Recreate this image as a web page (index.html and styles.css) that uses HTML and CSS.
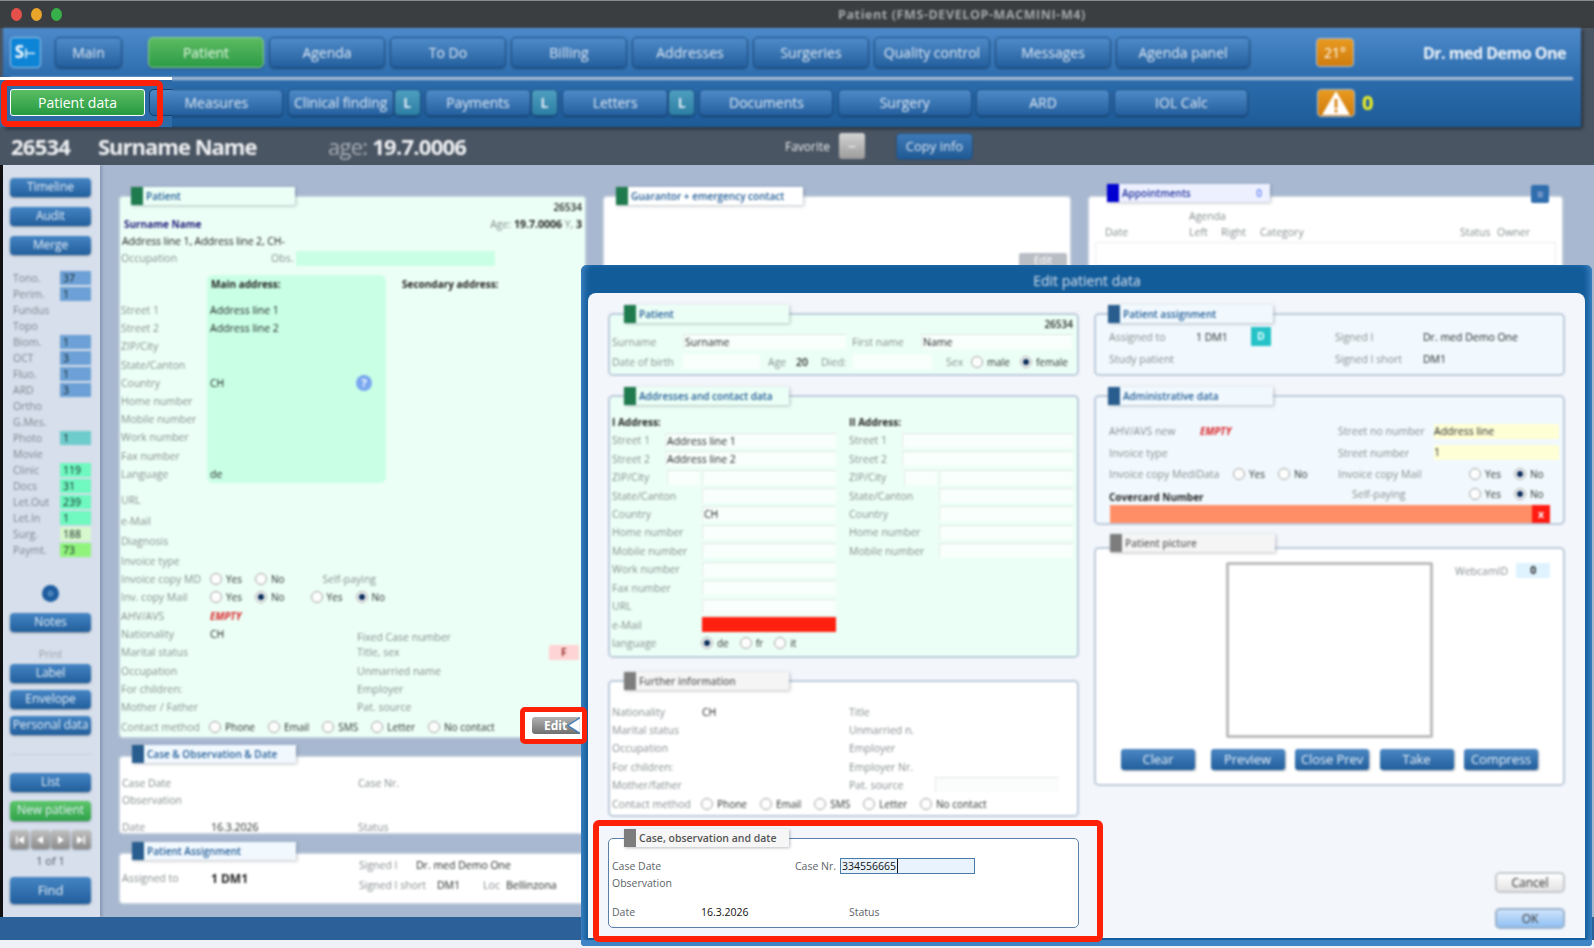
FILE: index.html
```html
<!DOCTYPE html>
<html lang="en">
<head>
<meta charset="utf-8">
<title>Patient</title>
<link rel="stylesheet" href="styles.css">
</head>
<body>
<div class="window">
  <header class="titlebar">
    <span class="light red"></span><span class="light amber"></span><span class="light green"></span>
    <span class="wintitle">Patient (FMS-DEVELOP-MACMINI-M4)</span>
  </header>

  <div class="chrome">
    <nav class="toolbar soft">
      <div class="tbrow tbrow1">
        <span class="logo">S<b>⊢</b></span>
        <a class="tb main-btn">Main</a>
        <a class="tb on">Patient</a>
        <a class="tb">Agenda</a>
        <a class="tb">To Do</a>
        <a class="tb">Billing</a>
        <a class="tb">Addresses</a>
        <a class="tb">Surgeries</a>
        <a class="tb">Quality control</a>
        <a class="tb">Messages</a>
        <a class="tb w134">Agenda panel</a>
        <span class="badge temp">21°</span>
        <span class="doctor">Dr. med Demo One</span>
      </div>
      <div class="tbsep"></div>
      <div class="tbrow tbrow2">
        <a class="tb w134">Patient data</a>
        <a class="tb w134">Measures</a>
        <a class="tb w106 join">Clinical finding</a><a class="tb l">L</a>
        <a class="tb w106 join">Payments</a><a class="tb l">L</a>
        <a class="tb w106 join">Letters</a><a class="tb l">L</a>
        <a class="tb w134">Documents</a>
        <a class="tb w134">Surgery</a>
        <a class="tb w134">ARD</a>
        <a class="tb w134">IOL Calc</a>
        <span class="badge warn"><svg viewBox="0 0 30 26" width="30" height="26"><path d="M15 1 L29 25 H1 Z" fill="#fff"/><rect x="13.6" y="9" width="2.8" height="9" fill="#d9861a"/><rect x="13.6" y="19.5" width="2.8" height="3" fill="#d9861a"/></svg></span>
        <span class="warncount">0</span>
      </div>
    </nav>
    <div class="patientbar soft">
      <span class="pid">26534</span>
      <span class="pname">Surname Name</span>
      <span class="page"><i>age:</i> 19.7.0006</span>
      <span class="fav">Favorite</span>
      <span class="favbtn">–</span>
      <a class="copyinfo">Copy info</a>
    </div>
  </div>

  <div class="body">
    <aside class="sidebar">
      <a class="sbtn">Timeline</a>
      <a class="sbtn">Audit</a>
      <a class="sbtn">Merge</a>
      <ul class="counts">
        <li><span>Tono.</span><b class="c-blue">37</b></li>
        <li><span>Perim.</span><b class="c-blue">1</b></li>
        <li><span>Fundus</span></li>
        <li><span>Topo</span></li>
        <li><span>Biom.</span><b class="c-blue">1</b></li>
        <li><span>OCT</span><b class="c-blue">3</b></li>
        <li><span>Fluo.</span><b class="c-blue">1</b></li>
        <li><span>ARD</span><b class="c-blue">3</b></li>
        <li><span>Ortho</span></li>
        <li><span>G.Mes.</span></li>
        <li><span>Photo</span><b class="c-teal">1</b></li>
        <li><span>Movie</span></li>
        <li><span>Clinic</span><b class="c-mint">119</b></li>
        <li><span>Docs</span><b class="c-mint">31</b></li>
        <li><span>Let.Out</span><b class="c-mint">239</b></li>
        <li><span>Let.In</span><b class="c-mint">1</b></li>
        <li><span>Surg.</span><b class="c-pale">188</b></li>
        <li><span>Paymt.</span><b class="c-lime">73</b></li>
      </ul>
      <span class="round"><i></i></span>
      <a class="sbtn notes">Notes</a>
      <span class="printlbl">Print</span>
      <a class="sbtn">Label</a>
      <a class="sbtn g6">Envelope</a>
      <a class="sbtn g6">Personal data</a>
      <hr class="sbsep">
      <a class="sbtn">List</a>
      <a class="sbtn newp">New patient</a>
      <div class="pager">
        <span><svg viewBox="0 0 10 10" width="10" height="10"><path d="M1 1h1.5v8H1zM9 1v8L3 5z" fill="#fff"/></svg></span>
        <span><svg viewBox="0 0 10 10" width="10" height="10"><path d="M8 1v8L2 5z" fill="#fff"/></svg></span>
        <span><svg viewBox="0 0 10 10" width="10" height="10"><path d="M2 1v8l6-4z" fill="#fff"/></svg></span>
        <span><svg viewBox="0 0 10 10" width="10" height="10"><path d="M1 1v8l6-4zM7.5 1H9v8H7.5z" fill="#fff"/></svg></span>
      </div>
      <span class="oneof">1 of 1</span>
      <a class="sbtn find">Find</a>
    </aside>

    <main class="desk soft">
      <div class="deskcol">
        <section class="panel mint p-patient">
          <div class="tab"><i class="sq sq-green"></i><span>Patient</span></div>
          <div class="p-id">26534</div>
          <div class="p-head"><b class="navy">Surname Name</b><span class="p-age"><span class="lb">Age:</span> <b>19.7.0006</b> <span class="lb">Y,</span> <b>3</b></span></div>
          <div class="p-addr">Address line 1, Address line 2, CH-</div>
          <div class="p-occ"><span class="lb">Occupation</span><span class="lb obs">Obs.</span><span class="obsbox"></span></div>
          <div class="addrgrid">
            <div class="addrcell"></div>
            <b class="h-main">Main address:</b><b class="h-sec">Secondary address:</b>
            <span class="lb r3">Street 1</span><span class="val r3">Address line 1</span>
            <span class="lb r4">Street 2</span><span class="val r4">Address line 2</span>
            <span class="lb r5">ZIP/City</span>
            <span class="lb r6">State/Canton</span>
            <span class="lb r7">Country</span><span class="val r7 withhelp">CH<i class="help">?</i></span>
            <span class="lb r8">Home number</span>
            <span class="lb r9">Mobile number</span>
            <span class="lb r10">Work number</span>
            <span class="lb r11">Fax number</span>
            <span class="lb r12">Language</span><span class="val r12">de</span>
          </div>
          <div class="plain"><span class="lb">URL</span></div>
          <div class="plain tall"><span class="lb">e-Mail</span></div>
          <div class="plain"><span class="lb">Diagnosis</span></div>
          <div class="plain"><span class="lb">Invoice type</span></div>
          <div class="crow"><span class="lb lc">Invoice copy MD</span><span class="radios"><label class="opt"><i class="rd"></i>Yes</label><label class="opt"><i class="rd"></i>No</label></span><span class="lb selfp">Self-paying</span></div>
          <div class="crow"><span class="lb lc">Inv. copy Mail</span><span class="radios"><label class="opt"><i class="rd"></i>Yes</label><label class="opt"><i class="rd on"></i>No</label></span><span class="radios second"><label class="opt"><i class="rd"></i>Yes</label><label class="opt"><i class="rd on"></i>No</label></span></div>
          <div class="crow"><span class="lb lc">AHV/AVS</span><em class="empty">EMPTY</em></div>
          <div class="twocol">
            <div class="crow"><span class="lb lc">Nationality</span><span class="val">CH</span></div><div class="crow low"><span class="lb">Fixed Case number</span></div>
            <div class="crow"><span class="lb lc">Marital status</span></div><div class="crow"><span class="lb">Title, sex</span><span class="sexbox">F</span></div>
            <div class="crow"><span class="lb lc">Occupation</span></div><div class="crow"><span class="lb">Unmarried name</span></div>
            <div class="crow"><span class="lb lc">For children:</span></div><div class="crow"><span class="lb">Employer</span></div>
            <div class="crow"><span class="lb lc">Mother / Father</span></div><div class="crow"><span class="lb">Pat. source</span></div>
          </div>
          <div class="crow contact"><span class="lb lc">Contact method</span><span class="radios wide"><label class="opt"><i class="rd"></i>Phone</label><label class="opt"><i class="rd"></i>Email</label><label class="opt"><i class="rd"></i>SMS</label><label class="opt"><i class="rd"></i>Letter</label><label class="opt"><i class="rd"></i>No contact</label></span></div>
        </section>

        <section class="panel white p-case">
          <div class="tab"><i class="sq sq-blue"></i><span>Case &amp; Observation &amp; Date</span></div>
          <div class="twocol mt8">
            <div class="crow"><span class="lb lc">Case Date</span></div><div class="crow"><span class="lb">Case Nr.</span></div>
            <div class="crow"><span class="lb lc">Observation</span></div><div class="crow"></div>
          </div>
          <div class="twocol mt10">
            <div class="crow"><span class="lb lc">Date</span><span class="val">16.3.2026</span></div><div class="crow"><span class="lb">Status</span></div>
          </div>
        </section>

        <section class="panel white p-assign">
          <div class="tab"><i class="sq sq-blue"></i><span>Patient Assignment</span></div>
          <div class="assignrow">
            <div class="as-left"><span class="lb lc">Assigned to</span><b class="big">1 DM1</b></div>
            <div class="as-right">
              <div class="crow"><span class="lb s-lb">Signed I</span><span class="val">Dr. med Demo One</span></div>
              <div class="crow"><span class="lb s-lb2">Signed I short</span><span class="val">DM1</span><span class="lb loc">Loc</span><span class="val">Bellinzona</span></div>
            </div>
          </div>
        </section>
      </div>

      <section class="panel white p-guar">
        <div class="tab"><i class="sq sq-green"></i><span>Guarantor + emergency contact</span></div>
        <span class="peek">Edit</span>
      </section>

      <section class="panel white p-appt">
        <div class="apptop">
          <div class="tab tab-appt"><i class="sq sq-navy"></i><span>Appointments</span><em>0</em></div>
          <span class="mini">≡</span>
        </div>
        <div class="appt-h1"><span class="lb">Agenda</span></div>
        <div class="appt-h2"><span class="lb">Date</span><span class="lb">Left</span><span class="lb">Right</span><span class="lb">Category</span><span class="lb">Status</span><span class="lb">Owner</span></div>
        <div class="appt-list"></div>
      </section>
    </main>
  </div>
  <footer class="footer"></footer>
  <div class="bottomline"></div>

  <!-- Edit dialog -->
  <div class="modal">
    <div class="modaltitle">Edit patient data</div>
    <div class="modalbody">
      <div class="mcol">
        <section class="panel mint fs f-pat soft">
          <div class="tab"><i class="sq sq-green"></i><span>Patient</span></div>
          <div class="f-id">26534</div>
          <div class="frow"><span class="lb w71">Surname</span><span class="inp w163">Surname</span><span class="lb fn">First name</span><span class="inp w151">Name</span></div>
          <div class="frow mt4"><span class="lb w71">Date of birth</span><span class="inp bare w77"></span><span class="lb ag">Age</span><b class="ag2">20</b><span class="lb died">Died:</span><span class="inp bare w79"></span><span class="lb sx">Sex</span><span class="radios sexes"><label class="opt"><i class="rd"></i>male</label><label class="opt"><i class="rd on"></i>female</label></span></div>
        </section>

        <section class="panel mint fs f-adr soft">
          <div class="tab"><i class="sq sq-green"></i><span>Addresses and contact data</span></div>
          <div class="adrcols">
            <div class="adrcol">
              <b class="adrh">I Address:</b>
              <div class="arow"><span class="lb w53">Street 1</span><span class="inp fx">Address line 1</span></div>
              <div class="arow"><span class="lb w53">Street 2</span><span class="inp fx">Address line 2</span></div>
              <div class="arow"><span class="lb w55">ZIP/City</span><span class="inp w33"></span><span class="inp fx"></span></div>
              <div class="arow"><span class="lb w90">State/Canton</span><span class="inp fx"></span></div>
              <div class="arow"><span class="lb w90">Country</span><span class="inp fx">CH</span></div>
              <div class="arow"><span class="lb w90">Home number</span><span class="inp fx"></span></div>
              <div class="arow"><span class="lb w90">Mobile number</span><span class="inp fx"></span></div>
              <div class="arow"><span class="lb w90">Work number</span><span class="inp fx"></span></div>
              <div class="arow"><span class="lb w90">Fax number</span><span class="inp fx"></span></div>
              <div class="arow"><span class="lb w90">URL</span><span class="inp fx"></span></div>
              <div class="arow"><span class="lb w90">e-Mail</span><span class="inp fx bad"></span></div>
              <div class="arow"><span class="lb w90">language</span><span class="radios langs"><label class="opt"><i class="rd on"></i>de</label><label class="opt"><i class="rd"></i>fr</label><label class="opt"><i class="rd"></i>it</label></span></div>
            </div>
            <div class="adrcol">
              <b class="adrh">II Address:</b>
              <div class="arow"><span class="lb w53">Street 1</span><span class="inp fx"></span></div>
              <div class="arow"><span class="lb w53">Street 2</span><span class="inp fx"></span></div>
              <div class="arow"><span class="lb w55">ZIP/City</span><span class="inp w33"></span><span class="inp fx"></span></div>
              <div class="arow"><span class="lb w90">State/Canton</span><span class="inp fx"></span></div>
              <div class="arow"><span class="lb w90">Country</span><span class="inp fx"></span></div>
              <div class="arow"><span class="lb w90">Home number</span><span class="inp fx"></span></div>
              <div class="arow"><span class="lb w90">Mobile number</span><span class="inp fx"></span></div>
            </div>
          </div>
        </section>

        <section class="panel white fs f-fur soft">
          <div class="tab tab-grey"><i class="sq sq-grey"></i><span>Further information</span></div>
          <div class="furgrid">
            <div class="arow"><span class="lb w90">Nationality</span><span class="val">CH</span></div><div class="arow"><span class="lb">Title</span></div>
            <div class="arow"><span class="lb w90">Marital status</span></div><div class="arow"><span class="lb">Unmarried n.</span></div>
            <div class="arow"><span class="lb w90">Occupation</span></div><div class="arow"><span class="lb">Employer</span></div>
            <div class="arow"><span class="lb w90">For children:</span></div><div class="arow"><span class="lb">Employer Nr.</span></div>
            <div class="arow"><span class="lb w90">Mother/father</span></div><div class="arow"><span class="lb w86">Pat. source</span><span class="inp w124"></span></div>
          </div>
          <div class="arow mt2"><span class="lb w90 cm">Contact method</span><span class="radios wide2"><label class="opt"><i class="rd"></i>Phone</label><label class="opt"><i class="rd"></i>Email</label><label class="opt"><i class="rd"></i>SMS</label><label class="opt"><i class="rd"></i>Letter</label><label class="opt"><i class="rd"></i>No contact</label></span></div>
        </section>

        <section class="panel fs f-case">
          <div class="tab tab-grey"><i class="sq sq-grey"></i><span>Case, observation and date</span></div>
          <div class="caserow r-first"><span class="cl cl183">Case Date</span><span class="cl">Case Nr.</span><span class="caseinp"><span class="caret">334556665</span></span></div>
          <div class="caserow"><span class="cl">Observation</span></div>
          <div class="caserow r-date"><span class="cl cl89">Date</span><span class="cv">16.3.2026</span><span class="cl">Status</span></div>
        </section>
      </div>

      <div class="mcol">
        <section class="panel bluish fs f-asg soft">
          <div class="tab tab-blue"><i class="sq sq-blue"></i><span>Patient assignment</span></div>
          <div class="asggrid">
            <span class="lb">Assigned to</span><span class="val asgv">1 DM1<i class="dbox">D</i></span><span class="lb">Signed I</span><span class="val">Dr. med Demo One</span>
            <span class="lb">Study patient</span><span></span><span class="lb">Signed I short</span><span class="val">DM1</span>
          </div>
        </section>

        <section class="panel bluish fs f-adm soft">
          <div class="tab tab-blue"><i class="sq sq-blue"></i><span>Administrative data</span></div>
          <div class="admgrid">
            <div class="admrow"><span class="lb w91">AHV/AVS new</span><em class="empty">EMPTY</em></div>
            <div class="admrow"><span class="lb w96">Street no number</span><span class="yel">Address line</span></div>
            <div class="admrow"><span class="lb">Invoice type</span></div>
            <div class="admrow"><span class="lb w96">Street number</span><span class="yel">1</span></div>
            <div class="admrow"><span class="lb w124">Invoice copy MediData</span><span class="radios"><label class="opt"><i class="rd"></i>Yes</label><label class="opt"><i class="rd"></i>No</label></span></div>
            <div class="admrow"><span class="lb w131">Invoice copy Mail</span><span class="radios"><label class="opt"><i class="rd"></i>Yes</label><label class="opt"><i class="rd on"></i>No</label></span></div>
            <div class="admrow"><b class="ccn">Covercard Number</b></div>
            <div class="admrow"><span class="lb w131 selfp2">Self-paying</span><span class="radios"><label class="opt"><i class="rd"></i>Yes</label><label class="opt"><i class="rd on"></i>No</label></span></div>
          </div>
          <div class="ccbar"><i>x</i></div>
        </section>

        <section class="panel white fs f-pic soft">
          <div class="tab tab-grey"><i class="sq sq-grey"></i><span>Patient picture</span></div>
          <div class="picrow">
            <div class="picbox"></div>
            <div class="webcam"><span class="lb">WebcamID</span><span class="camval">0</span></div>
          </div>
          <div class="picbtns">
            <a class="pbtn first">Clear</a><a class="pbtn">Preview</a><a class="pbtn">Close Prev</a><a class="pbtn">Take</a><a class="pbtn">Compress</a>
          </div>
        </section>

        <div class="dlgbtns soft">
          <a class="dbtn">Cancel</a>
          <a class="dbtn ok">OK</a>
        </div>
      </div>
    </div>
  </div>

  <!-- Red annotations, drawn over the screenshot -->
  <div class="note-tl">
    <div class="note-btn">Patient data</div>
    <div class="note-next"></div>
    <div class="note-box"></div>
  </div>
  <div class="note-edit"><span class="editpill">Edit<svg viewBox="0 0 14 17" width="14" height="17"><path d="M14 0 L1 8.5 L14 17" fill="#fff" stroke="#3f7fbe" stroke-width="1.5"/></svg></span></div>
  <div class="note-case"></div>
</div>
</body>
</html>
```

FILE: styles.css
```css
* { box-sizing: border-box; }
html, body { margin: 0; padding: 0; background: #fff; }
body { font-family: "Open Sans", "Liberation Sans", sans-serif; font-size: 10.5px; color: #222; overflow: hidden; }
a { display: block; text-decoration: none; }
i, em { font-style: normal; }
.soft { filter: blur(.95px); }

.window { position: relative; width: 1594px; height: 948px; overflow: hidden; background: #f4f6f8; display: flex; flex-direction: column; }

/* title bar */
.titlebar { height: 28px; flex: none; background: #3b3e41; border-top: 1px solid #8a8a8a; display: flex; align-items: center; padding-left: 11px; gap: 9px; }
.light { width: 11px; height: 13px; border-radius: 50%; filter: blur(.7px); }
.light.red { background: #e6504a; }
.light.amber { background: #e9a52a; }
.light.green { background: #37b04a; }
.wintitle { margin-left: 767px; color: #a6a9ab; font-weight: 700; font-size: 12.5px; letter-spacing: .6px; filter: blur(.95px); white-space: nowrap; }

/* toolbar */
.chrome { flex: none; background: #4a5563; }
.toolbar { width: 1578px; height: 99px; margin-left: 3px; padding-top: 9px; background: linear-gradient(#4d8acb, #2f6fb0 45%, #1d5b98); box-shadow: 2px 2px 3px rgba(0,0,0,.45); }
.tbrow { display: flex; align-items: center; }
.tbrow1 { height: 31px; padding-left: 7px; gap: 5px; }
.tbrow2 { height: 27px; margin-top: 9px; padding-left: 8px; gap: 4.3px; }
.tbsep { height: 3px; margin: 9px 8px 0 7px; background: #a9bfd6; }
.logo { width: 31px; height: 31px; flex: none; margin-right: 9px; background: #0d84d6; border: 1px solid #9cc4e6; border-radius: 4px; color: #fff; font-weight: 700; font-size: 17px; text-align: center; line-height: 28px; }
.logo b { font-weight: 700; font-size: 13px; font-family: "DejaVu Sans", sans-serif; }
.tb { flex: none; width: 116px; height: 100%; border: 1px solid #1c4f84; border-radius: 5px; background: linear-gradient(#4f8bc9, #245f9e); color: #dfeaf5; font-size: 14px; line-height: 29px; text-align: center; white-space: nowrap; box-shadow: 0 1px 2px rgba(0,0,0,.35); }
.tbrow2 .tb { line-height: 25px; }
.tb.main-btn { width: 67px; margin-right: 21px; }
.tb.on { background: linear-gradient(#5cbb62, #2c9b46); border-color: #8fd09a; color: #eaf9ea; }
.tb.w134 { width: 134px; }
.tb.w106 { width: 106px; }
.tb.join { margin-right: -4.3px; letter-spacing: -.1px; }
.tb.l { width: 27px; background: linear-gradient(#4f9fc0, #2c7ea3); font-weight: 700; }
.badge { flex: none; width: 38px; border: 1px solid #a9bfd6; border-radius: 4px; background: linear-gradient(#e89a20, #cf7c0d); color: #fff; text-align: center; display: flex; align-items: center; justify-content: center; }
.badge.temp { height: 29px; margin-left: 61px; font-size: 14px; }
.badge.warn { height: 28px; margin-left: 64px; }
.warncount { color: #f4f41c; font-size: 20px; font-weight: 700; margin-left: 3px; line-height: 1; }
.doctor { margin-left: auto; padding-right: 15px; color: #eef4fa; font-weight: 700; font-size: 16px; white-space: nowrap; letter-spacing: -.5px; }

/* patient bar */
.patientbar { height: 38px; display: flex; align-items: center; padding-left: 11px; color: #eef0f2; white-space: nowrap; }
.pid, .pname, .page { font-size: 22px; font-weight: 700; letter-spacing: -.75px; }
.pid { width: 87px; }
.pname { width: 230px; letter-spacing: -1px; }
.page { width: 457px; }
.page i { color: #a6adb5; font-weight: 500; }
.fav { font-size: 12px; width: 54px; color: #eceff2; }
.favbtn { width: 26px; height: 26px; background: linear-gradient(#d4d4d4, #9b9b9b); border-radius: 3px; text-align: center; color: #eee; font-size: 16px; line-height: 24px; margin-right: 31px; }
.copyinfo { width: 77px; height: 27px; border-radius: 4px; background: linear-gradient(#3f7ab8, #1f5a96); border: 1px solid #274f78; color: #dce8f4; text-align: center; font-size: 13px; line-height: 24px; }

/* body */
.body { flex: 1; min-height: 0; display: flex; background: #a8b8d0; }
.footer { flex: none; height: 23px; background: #2c6098; }
.bottomline { flex: none; height: 8px; background: #eef1f5; }

/* sidebar */
.sidebar { width: 100px; flex: none; border-left: 3px solid #111; background: #d6dfeb; padding: 13px 9px 0 7px; display: flex; flex-direction: column; box-shadow: 2px 0 3px rgba(70,90,130,.35); }
.sidebar > * { filter: blur(.95px); }
.sbtn { height: 19px; flex: none; margin-bottom: 10px; border-radius: 4px; background: linear-gradient(#4585c4, #215e9c); color: #e6eff8; text-align: center; font-size: 12px; line-height: 17px; box-shadow: 0 1px 2px rgba(40,50,70,.45); white-space: nowrap; letter-spacing: -.1px; }
.sbtn.g6 { margin-top: -3px; }
.counts { list-style: none; margin: 5px 0 0; padding: 0; height: 288px; }
.counts li { height: 16px; display: flex; align-items: center; }
.counts span { width: 50px; padding-left: 3px; color: #7d8690; font-size: 10.5px; }
.counts b { width: 31px; height: 14px; padding-left: 3px; font-weight: 500; font-size: 10.5px; line-height: 14px; color: #122; }
.c-blue { background: #6ca0d6; }
.c-teal { background: #6fcccc; }
.c-mint { background: #6ff8c0; }
.c-pale { background: #d6f8cc; }
.c-lime { background: #90f47c; }
.round { width: 17px; height: 17px; flex: none; margin: 27px 0 11px 32px; border-radius: 50%; background: #1e5da0; display: flex; align-items: center; justify-content: center; }
.round i { width: 5px; height: 5px; border: 1px solid #9cc4e6; border-radius: 50%; }
.notes { margin-bottom: 12px; }
.printlbl { height: 20px; text-align: center; color: #98a1ab; line-height: 20px; }
.sbsep { margin: 9px 0 18px; width: 81px; border: 0; border-top: 1px solid #c6cfdb; }
.newp { height: 20px; margin-top: -1px; margin-bottom: 9px; background: linear-gradient(#5cc56a, #2fa24a); }
.pager { display: flex; justify-content: space-between; width: 81px; }
.pager span { width: 19px; height: 19px; background: linear-gradient(#c0c0c0, #8c8c8c); border-radius: 3px; display: flex; align-items: center; justify-content: center; box-shadow: 0 1px 2px rgba(40,50,70,.4); }
.oneof { height: 24px; line-height: 24px; text-align: center; color: #556; font-size: 11px; }
.find { height: 27px; line-height: 26px; font-size: 13px; margin-top: 4px; }

/* desk */
.desk { flex: 1; min-width: 0; display: grid; grid-template-columns: 469px 470px 477px; column-gap: 15px; padding: 30px 0 0 18px; align-items: start; }
.deskcol { display: flex; flex-direction: column; }
.panel { border: 2px solid #bccada; border-radius: 5px; }
.mint { background: #ecfff6; }
.white { background: #fff; }
.bluish { background: #f1f9fe; }
.tab { width: 164px; height: 18px; margin: -10px 0 0 10px; background: inherit; display: flex; align-items: center; box-shadow: 1px 1px 3px rgba(60,70,90,.35); font-size: 10px; font-weight: 600; color: #1f5a94; white-space: nowrap; }
.p-case .tab, .p-assign .tab { background: #f1f8fe; margin-top: -12px; }
.sq { width: 12px; height: 100%; flex: none; margin-right: 3px; }
.sq-green { background: #1f7a4d; }
.sq-blue { background: #285d8e; }
.sq-navy { background: #0000d0; }
.sq-grey { background: #7d7d7d; }
.tab-grey { background: #f5f5f5; color: #666; }
.tab-blue { background: #f1f9fe; }
.lb { color: #858d8f; white-space: nowrap; }
.val { color: #1c2021; white-space: nowrap; font-weight: 500; }
.navy { color: #201a78; }

/* patient panel */
.p-patient { height: 544px; padding: 0 1px; }
.p-id { height: 15px; margin-top: -5px; text-align: right; font-weight: 600; font-size: 10px; line-height: 14px; padding-right: 2px; }
.p-head { display: flex; justify-content: space-between; padding: 0 2px 0 3px; margin-top: 1px; height: 17px; line-height: 17px; font-size: 10px; }
.p-age { font-size: 10.5px; }
.p-addr { height: 17px; padding-left: 1px; line-height: 17px; font-size: 10.5px; letter-spacing: -.1px; }
.p-occ { height: 16px; display: flex; align-items: center; }
.obs { margin-left: 94px; width: 25px; }
.obsbox { width: 199px; height: 15px; background: #c9ffe5; }
.addrgrid { margin-top: 9px; display: grid; grid-template-columns: 86px 179px 1fr; grid-template-rows: 18px 8px repeat(10, 18.2px); align-items: center; }
.addrcell { grid-column: 2; grid-row: 1 / -1; align-self: stretch; background: #c9ffe5; border-radius: 6px; }
.h-main, .h-sec { grid-row: 1; font-size: 10px; font-weight: 700; }
.h-main { grid-column: 2; padding-left: 4px; }
.h-sec { grid-column: 3; padding-left: 16px; }
.addrgrid .lb { grid-column: 1; }
.addrgrid .val { grid-column: 2; padding-left: 3px; }
.r3 { grid-row: 3; } .r4 { grid-row: 4; } .r5 { grid-row: 5; } .r6 { grid-row: 6; } .r7 { grid-row: 7; } .r8 { grid-row: 8; } .r9 { grid-row: 9; } .r10 { grid-row: 10; } .r11 { grid-row: 11; } .r12 { grid-row: 12; }
.withhelp { display: flex; justify-content: space-between; align-items: center; padding-right: 14px; }
.help { width: 16px; height: 16px; border-radius: 50%; background: #7aa8f0; color: #fff; text-align: center; line-height: 16px; font-size: 11px; font-weight: 700; }
.plain { height: 18px; line-height: 18px; margin-top: 2px; }
.addrgrid + .plain { margin-top: 8px; }
.plain.tall { margin-top: 3px; }
.crow { height: 18.3px; display: flex; align-items: center; white-space: nowrap; }
.lc { width: 89px; flex: none; }
.radios { display: flex; gap: 13px; font-size: 10px; color: #2a2f30; font-weight: 500; }
.opt { display: flex; align-items: center; gap: 4px; }
.rd { width: 12px; height: 12px; border: 1px solid #a5a5a5; border-radius: 50%; background: #fdfdfd; flex: none; display: block; }
.rd.on { background: radial-gradient(circle, #10325e 0 2.8px, #fff 3.6px); }
.selfp { margin-left: 38px; }
.second { margin-left: 26px; }
.empty { color: #d9262a; font-weight: 700; font-style: italic; font-size: 10px; }
.twocol { display: grid; grid-template-columns: 236px 1fr; }
.twocol .low { padding-top: 6px; }
.sexbox { margin-left: auto; margin-right: 5px; width: 30px; height: 15px; background: #ffd4d4; text-align: center; line-height: 15px; font-weight: 700; color: #933; }
.contact { height: 22px; margin-top: 0; }
.wide { margin-left: -1px; }
.p-case { height: 80px; margin-top: 16px; padding: 0 2px; }
.p-case .crow { height: 17px; }
.mt8 { margin-top: 11px; }
.mt10 { margin-top: 10px; }
.p-assign { height: 53px; margin-top: 17px; padding: 0 2px; }
.assignrow { display: flex; }
.as-left { width: 237px; display: flex; align-items: center; height: 30px; margin-top: 3px; }
.as-right { margin-top: -5px; }
.as-right .crow { height: 20.3px; }
.big { font-size: 12px; font-weight: 700; }
.s-lb { width: 57px; }
.s-lb2 { width: 78px; }
.loc { margin-left: 23px; width: 23px; }

.p-guar { height: 100px; }
.p-guar .tab { width: 187px; margin-left: 12px; }
.peek { display: block; width: 48px; height: 16px; margin: 48px 0 0 415px; background: #b9bdc4; color: #fff; text-align: center; border-radius: 2px; }
.p-appt { height: 100px; background: #fff; }
.apptop { display: flex; justify-content: space-between; padding-right: 13px; height: 5px; }
.tab-appt { width: 163px; margin: -13px 0 0 18px; background: #edf1ff; color: #1f2f9a; }
.tab-appt em { margin-left: auto; margin-right: 8px; color: #5d7cf0; }
.mini { width: 18px; height: 18px; margin-top: -12px; background: #2f6eae; color: #dce; text-align: center; line-height: 18px; border-radius: 2px; }
.appt-h1 { padding-left: 100px; margin-top: 4px; height: 16px; line-height: 21px; }
.appt-h2 { display: grid; grid-template-columns: 84px 32px 39px 200px 37px auto; padding-left: 16px; height: 17px; line-height: 20px; }
.appt-list { margin: 3px 6px 0; height: 24px; border: 1px solid #ececec; }

/* modal */
.modal { position: absolute; left: 581px; top: 265px; width: 1011px; height: 681px; background: #135c9a; border-radius: 6px 6px 4px 4px; display: flex; flex-direction: column; padding: 0 7px 8px; box-shadow: inset 0 -6px 0 #3f85c5, inset 6px 0 6px -3px #3f85c5, inset -6px 0 6px -3px #3f85c5; }
.modaltitle { height: 28px; flex: none; color: #d4e1ee; font-size: 14px; text-align: center; line-height: 32px; filter: blur(.95px); padding-left: 1px; }
.modalbody { flex: 1; min-height: 0; background: #f3f6fb; border-radius: 8px 8px 0 0; padding: 20px 20px 0; display: grid; grid-template-columns: 471px 471px; column-gap: 15px; align-items: start; }
.mcol { display: flex; flex-direction: column; }
.fs { padding: 0 2px; }
.fs .tab { margin-left: 12px; width: 165px; }
.f-pat { height: 63px; }
.f-id { height: 15px; margin-top: -6px; margin-bottom: 2px; text-align: right; font-weight: 600; font-size: 10px; line-height: 14px; padding-right: 2px; }
.frow { display: flex; align-items: center; height: 15px; white-space: nowrap; }
.mt4 { margin-top: 5px; }
.inp { display: block; height: 15px; background: #f8fffc; border-top: 1px solid #dfe6e3; border-left: 1px solid #e5ebe8; color: #1c2021; font-weight: 500; padding-left: 1px; line-height: 14px; flex: none; }
.inp.bare { border: 0; }
.inp.fx { flex: 1; min-width: 0; }
.inp.bad { background: #ff2010; border: 0; }
.white .inp { background: #fbfcfc; }
.w71 { width: 71px; } .w163 { width: 163px; } .w151 { width: 151px; } .w77 { width: 77px; } .w79 { width: 79px; }
.w33 { width: 33px; margin-right: 2px; } .w53 { width: 53px; flex: none; } .w55 { width: 55px; flex: none; } .w90 { width: 90px; flex: none; } .w86 { width: 86px; flex: none; } .w124 { width: 124px; flex: none; }
.w91 { width: 91px; flex: none; } .w96 { width: 96px; flex: none; } .w131 { width: 131px; flex: none; }
.fn { width: 75px; padding-left: 6px; }
.ag { margin-left: 8px; width: 28px; }
.ag2 { width: 25px; font-size: 10.5px; font-weight: 600; }
.died { width: 32px; }
.sx { margin-left: 14px; width: 25px; }
.sexes { gap: 10px; }
.f-adr { height: 263px; margin-top: 19px; }
.adrcols { display: grid; grid-template-columns: 224px 224px; column-gap: 13px; padding-top: 8px; }
.adrcols .arow { height: 18.45px; }
.adrh { display: block; height: 18px; font-size: 10px; line-height: 18px; }
.arow { display: flex; align-items: center; height: 18.2px; white-space: nowrap; }
.langs { gap: 11px; margin-left: -1px; }
.f-fur { height: 137px; margin-top: 22px; }
.furgrid { display: grid; grid-template-columns: 237px 1fr; padding-top: 13px; }
.arow.mt2 { margin-top: 1px; }
.wide2 { margin-left: -1px; }
.f-case { height: 90px; margin-top: 21px; background: #fff; border: 1.5px solid #5b80a8; padding: 0 3px; }
.f-case .tab { height: 18px; font-size: 10.5px; font-weight: 600; color: #555; background: #f6f6f6; }
.caserow { display: flex; align-items: center; height: 17px; white-space: nowrap; }
.r-first { margin-top: 10px; }
.r-date { margin-top: 12px; }
.cl { color: #5d6468; font-size: 10.5px; }
.cl183 { width: 183px; }
.cl89 { width: 89px; }
.cv { width: 148px; color: #111; font-size: 10.5px; }
.caseinp { margin-left: 4px; width: 135px; height: 16px; background: #e8f3fe; border: 1px solid #4a7aa8; display: block; line-height: 14px; padding-left: 1px; color: #111; }
.caret { display: inline-block; height: 14px; border-right: 1px solid #111; padding-right: 1px; }
.f-asg { height: 63px; padding-left: 13px; }
.fs.f-asg .tab, .fs.f-adm .tab { margin-left: -1px; }
.asggrid { display: grid; grid-template-columns: 87px 139px 88px auto; grid-template-rows: 25px 20px; align-items: center; margin-top: 1px; }
.asgv { display: flex; align-items: center; }
.dbox { width: 20px; height: 19px; margin-left: 23px; background: #25c3c8; color: #e8ffff; text-align: center; line-height: 19px; font-weight: 700; }
.f-adm { height: 130px; margin-top: 19px; padding-left: 13px; }
.admgrid { display: grid; grid-template-columns: 229px 1fr; grid-template-rows: 22px 21px 21px 20px; margin-top: 15px; }
.admrow { display: flex; align-items: center; white-space: nowrap; }
.yel { width: 125px; height: 15px; background: #ffffd6; color: #1c2021; font-weight: 500; line-height: 15px; }
.ccn { font-size: 10px; color: #222; position: relative; top: 3px; }
.selfp2 { padding-left: 14px; }
.ccbar { height: 18px; width: 440px; margin: 1px 0 0 1px; background: #ff8e66; display: flex; justify-content: flex-end; }
.ccbar i { width: 18px; background: #ff1a12; color: #fff; font-weight: 700; text-align: center; line-height: 18px; }
.f-pic { height: 239px; margin-top: 22px; }
.fs.f-pic .tab { margin-top: -15px; }
.picrow { display: flex; padding-top: 10px; }
.picbox { width: 207px; height: 176px; margin-left: 128px; border: 3px solid #bdbdbd; border-radius: 2px; background: #fff; flex: none; }
.webcam { margin-left: 22px; display: flex; align-items: flex-start; height: 16px; gap: 8px; padding-top: 1px; line-height: 16px; }
.camval { width: 34px; height: 15px; background: #def3fe; text-align: center; font-weight: 700; line-height: 15px; }
.picbtns { display: flex; gap: 10.5px; padding: 11px 0 0 23px; }
.pbtn { width: 74px; height: 21px; flex: none; border-radius: 3px; background: linear-gradient(#4a87c3, #215e9c); color: #e6eff8; text-align: center; font-size: 13px; line-height: 20px; white-space: nowrap; box-shadow: 1px 1px 2px rgba(40,50,70,.4); letter-spacing: -.1px; }
.pbtn.first { margin-right: 5px; }
.dlgbtns { display: flex; flex-direction: column; align-items: flex-end; gap: 15px; margin-top: 86px; }
.dbtn { width: 70px; height: 21px; border: 2px solid #c4c8cc; border-radius: 5px; background: linear-gradient(#fff, #e3e3e3); color: #333; text-align: center; font-size: 12px; line-height: 17px; }
.dbtn.ok { background: linear-gradient(#cfe4fb, #8fc0f2); border-color: #9bb1cc; }

/* annotations */
.note-tl { position: absolute; left: 0; top: 77px; width: 172px; height: 50px; background: #2d6aa8; border-top: 3px solid #fff; overflow: hidden; z-index: 5; }
.note-btn { position: absolute; left: 10px; top: 9px; width: 135px; height: 27px; border: 1px solid #fff; border-radius: 3px; background: linear-gradient(#5bbd62, #269a42); color: #fff; text-align: center; font-size: 14px; font-weight: 500; line-height: 25px; }
.note-next { position: absolute; left: 149px; top: 9px; width: 40px; height: 27px; border: 1px solid #173f6b; border-radius: 5px; background: linear-gradient(#4f8bc9, #245f9e); }
.note-box { position: absolute; left: 1px; top: 0; width: 162px; height: 47px; border: 6px solid #ff2008; border-radius: 6px; }
.note-edit { position: absolute; left: 520px; top: 707px; width: 67px; height: 37px; border: 5px solid #ff2008; border-radius: 5px; background: #fff; display: flex; align-items: center; padding-left: 7px; z-index: 5; }
.editpill { display: flex; justify-content: space-between; align-items: center; width: 48px; height: 17px; padding-left: 12px; border-radius: 3px 0 0 3px; background: linear-gradient(#b2b2b2, #6f6f6f); color: #fff; font-weight: 700; font-size: 12px; overflow: hidden; }
.note-case { position: absolute; left: 593px; top: 820px; width: 510px; height: 122px; border: 6px solid #ff2008; border-radius: 6px; z-index: 5; }
```
